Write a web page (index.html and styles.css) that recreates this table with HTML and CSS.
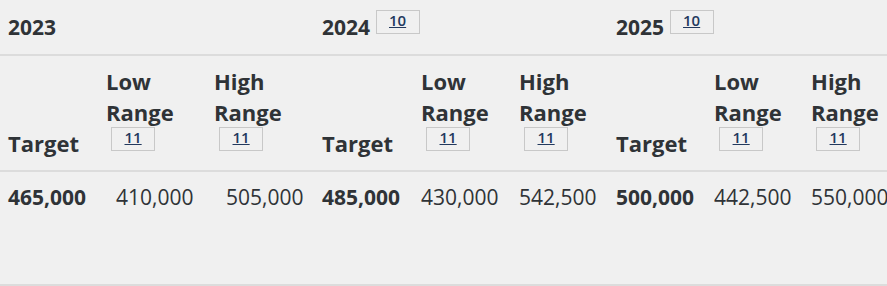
FILE: index.html
```html
<!DOCTYPE html>
<html lang="en">
<head>
<meta charset="utf-8">
<title>Targets</title>
<link rel="stylesheet" href="styles.css">
</head>
<body>
<table class="targets">
  <colgroup>
    <col class="c-a"><col class="c-b"><col class="c-b"><col class="c-c"><col class="c-d"><col class="c-e"><col class="c-d"><col class="c-e"><col class="c-f">
  </colgroup>
  <thead>
    <tr class="years">
      <th colspan="3">2023</th>
      <th colspan="3">2024 <a class="badge" href="#">10</a></th>
      <th colspan="3">2025 <a class="badge" href="#">10</a></th>
    </tr>
    <tr class="labels">
      <th><span class="lbl">Target</span></th>
      <th><span class="lbl">Low<br>Range</span><a class="badge sub" href="#">11</a></th>
      <th><span class="lbl">High<br>Range</span><a class="badge sub" href="#">11</a></th>
      <th><span class="lbl">Target</span></th>
      <th><span class="lbl">Low<br>Range</span><a class="badge sub" href="#">11</a></th>
      <th><span class="lbl">High<br>Range</span><a class="badge sub" href="#">11</a></th>
      <th><span class="lbl">Target</span></th>
      <th><span class="lbl">Low<br>Range</span><a class="badge sub" href="#">11</a></th>
      <th><span class="lbl">High<br>Range</span><a class="badge sub" href="#">11</a></th>
    </tr>
  </thead>
  <tbody>
    <tr class="values">
      <td class="target">465,000</td>
      <td class="shift-low">410,000</td>
      <td class="shift-high">505,000</td>
      <td class="target">485,000</td>
      <td>430,000</td>
      <td>542,500</td>
      <td class="target">500,000</td>
      <td>442,500</td>
      <td>550,000</td>
    </tr>
  </tbody>
</table>
</body>
</html>
```
FILE: styles.css
```css
html, body {
  margin: 0;
  padding: 0;
  overflow: hidden;
  background: #f0f0f0;
}

body {
  font-family: "Open Sans", "Noto Sans", sans-serif;
  color: #2f3337;
  font-size: 21px;
  line-height: 31px;
}

.targets {
  table-layout: fixed;
  width: 903px;
  border-collapse: separate;
  border-spacing: 0;
}

.c-a { width: 98px; }
.c-b { width: 108px; }
.c-c { width: 99px; }
.c-d { width: 98px; }
.c-e { width: 97px; }
.c-f { width: 100px; }

.targets th,
.targets td {
  text-align: left;
  padding: 10px 0 10px 8px;
  border-bottom: 2px solid #dcdcdc;
  white-space: nowrap;
}

.targets th {
  font-weight: 700;
}

.years th {
  padding-top: 10px;
  padding-bottom: 11px;
  vertical-align: bottom;
}

.labels th {
  vertical-align: bottom;
  padding-top: 10px;
  padding-bottom: 11px;
  font-size: 22px;
}

.lbl {
  display: block;
}

.values td {
  vertical-align: top;
  padding-top: 10px;
  padding-bottom: 71px;
  font-weight: 400;
}

.values td.target {
  font-weight: 700;
}

.values td.shift-low { padding-left: 18px; }
.values td.shift-high { padding-left: 20px; }

.badge {
  display: inline-block;
  font-size: 15px;
  font-weight: 600;
  line-height: 17px;
  padding: 1px 12.5px 4px;
  border: 1px solid #c8c8c8;
  color: #23395d;
  text-decoration: underline;
  vertical-align: 9px;
}

.badge.sub {
  display: block;
  width: fit-content;
  margin: -1px 0 8px 5px;
}
```
